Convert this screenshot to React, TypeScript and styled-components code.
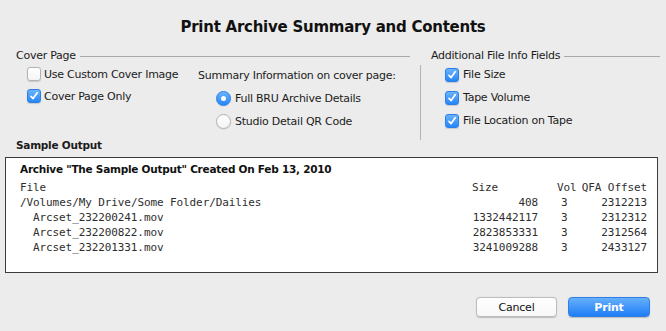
import styled, { createGlobalStyle } from 'styled-components';

const GlobalStyle = createGlobalStyle`
  body {
    margin: 0;
    background: #ececec;
    font-family: "DejaVu Sans", "Open Sans", sans-serif;
    font-size: 11px;
    letter-spacing: -0.25px;
    color: #1b1b1b;
  }
`;

const Dialog = styled.div`
  width: 666px;
  height: 331px;
  box-sizing: border-box;
  display: flex;
  flex-direction: column;
  background: #ececec;
`;

const Title = styled.h1`
  margin: 0;
  padding-top: 17px;
  height: 20px;
  line-height: 20px;
  text-align: center;
  font-size: 15px;
  font-weight: bold;
  letter-spacing: -0.25px;
  color: #111;
`;

const Top = styled.div`
  display: flex;
  height: 89px;
  margin-top: 12px;
  padding-left: 16px;
`;

const Group = styled.div<{ $width: number }>`
  width: ${(p) => p.$width}px;
  display: flex;
  flex-direction: column;
`;

const GroupHeader = styled.div`
  display: flex;
  align-items: center;
  gap: 4px;
  height: 14px;
  line-height: 14px;
  white-space: nowrap;

  &::after {
    content: '';
    flex: 1;
    height: 1px;
    background: #a9a9a9;
  }
`;

const Divider = styled.div`
  width: 1px;
  height: 75px;
  margin: 16px 10px 0 10px;
  background: #b4b4b4;
`;

const Columns = styled.div`
  display: flex;
`;

const CheckColumn = styled.div<{ $indent: number; $width?: number }>`
  box-sizing: border-box;
  display: flex;
  flex-direction: column;
  padding-left: ${(p) => p.$indent}px;
  width: ${(p) => (p.$width ? `${p.$width}px` : 'auto')};
  flex-shrink: 0;
`;

const Row = styled.label<{ $height: number; $gap: number }>`
  display: flex;
  align-items: center;
  gap: ${(p) => p.$gap}px;
  height: ${(p) => p.$height}px;
  white-space: nowrap;
`;

const Box = styled.span<{ $on?: boolean }>`
  width: 14px;
  height: 14px;
  box-sizing: border-box;
  border-radius: 3px;
  display: flex;
  align-items: center;
  justify-content: center;
  border: 1px solid ${(p) => (p.$on ? '#2a7fe8' : '#b3b3b3')};
  background: ${(p) =>
    p.$on ? 'linear-gradient(#6cb3fd, #2586f6)' : 'linear-gradient(#ffffff, #f4f4f4)'};
  box-shadow: 0 0.5px 1px rgba(0, 0, 0, 0.15);
`;

const Radio = styled.span<{ $on?: boolean }>`
  width: 15px;
  height: 15px;
  box-sizing: border-box;
  border-radius: 50%;
  display: flex;
  align-items: center;
  justify-content: center;
  border: 1px solid ${(p) => (p.$on ? '#2a7fe8' : '#b3b3b3')};
  background: ${(p) =>
    p.$on ? 'linear-gradient(#6cb3fd, #2586f6)' : 'linear-gradient(#ffffff, #f4f4f4)'};
  box-shadow: 0 0.5px 1px rgba(0, 0, 0, 0.15);

  &::after {
    content: '';
    display: ${(p) => (p.$on ? 'block' : 'none')};
    width: 5px;
    height: 5px;
    border-radius: 50%;
    background: #fff;
  }
`;

const SummaryColumn = styled.div`
  display: flex;
  flex-direction: column;
  padding-top: 2px;
  white-space: nowrap;
`;

const SummaryLabel = styled.div`
  height: 22px;
  line-height: 22px;
`;

const RadioList = styled.div`
  display: flex;
  flex-direction: column;
  padding-left: 18px;
`;

const SectionLabel = styled.div`
  height: 14px;
  line-height: 14px;
  padding-left: 16px;
  font-size: 10.5px;
  font-weight: bold;
`;

const OutputBox = styled.div`
  margin: 5px 0 0 5px;
  width: 653px;
  height: 116px;
  box-sizing: border-box;
  border: 1px solid #3c3c3c;
  background: #fff;
  padding: 5px 0 0 14px;
`;

const OutputTitle = styled.div`
  height: 12px;
  line-height: 12px;
  font-size: 10.5px;
  font-weight: bold;
  color: #111;
`;

const Table = styled.div`
  margin-top: 5px;
  display: grid;
  grid-template-columns: 452px 66px 43px 66px;
  grid-auto-rows: 15px;
  font-family: "DejaVu Sans Mono", "Liberation Mono", monospace;
  font-size: 11px;
  letter-spacing: -0.1px;
  line-height: 15px;
  color: #2e2e2e;
`;

const Cell = styled.div<{ $align?: 'left' | 'right'; $pad?: number }>`
  text-align: ${(p) => p.$align ?? 'left'};
  padding-left: ${(p) => p.$pad ?? 0}px;
  white-space: pre;
`;

const Footer = styled.div`
  display: flex;
  justify-content: flex-end;
  gap: 11px;
  margin-top: 24px;
  padding-right: 16px;
`;

const Button = styled.button<{ $primary?: boolean }>`
  width: ${(p) => (p.$primary ? 82 : 81)}px;
  height: 20px;
  border-radius: 4px;
  font-family: "DejaVu Sans", sans-serif;
  font-size: 11px;
  letter-spacing: -0.2px;
  font-weight: ${(p) => (p.$primary ? 'bold' : 'normal')};
  color: ${(p) => (p.$primary ? '#fff' : '#111')};
  border: 1px solid ${(p) => (p.$primary ? '#2f7fe6' : '#bdbdbd')};
  background: ${(p) =>
    p.$primary ? 'linear-gradient(#66b0fd, #1f7df5)' : 'linear-gradient(#ffffff, #f7f7f7)'};
  box-shadow: 0 0.5px 1px rgba(0, 0, 0, 0.2);
  padding: 0;
`;

const Check = () => (
  <svg width="10" height="10" viewBox="0 0 10 10">
    <path d="M2 5.4 L4.1 7.6 L8.2 1.8" fill="none" stroke="#fff" strokeWidth="1.7" strokeLinecap="round" strokeLinejoin="round" />
  </svg>
);

const CheckBox = ({ on }: { on?: boolean }) => <Box $on={on}>{on && <Check />}</Box>;

const rows = [
  { file: '/Volumes/My Drive/Some Folder/Dailies', size: '408', vol: '3', offset: '2312213', indent: 0 },
  { file: 'Arcset_232200241.mov', size: '1332442117', vol: '3', offset: '2312312', indent: 13 },
  { file: 'Arcset_232200822.mov', size: '2823853331', vol: '3', offset: '2312564', indent: 13 },
  { file: 'Arcset_232201331.mov', size: '3241009288', vol: '3', offset: '2433127', indent: 13 },
];

const App = () => {
  return (
    <>
      <GlobalStyle />
      <Dialog>
        <Title>Print Archive Summary and Contents</Title>
        <Top>
          <Group $width={394}>
            <GroupHeader>Cover Page</GroupHeader>
            <Columns>
              <CheckColumn $indent={11} $width={182}>
                <Row $height={22} $gap={3}>
                  <CheckBox />
                  Use Custom Cover Image
                </Row>
                <Row $height={22} $gap={3}>
                  <CheckBox on />
                  Cover Page Only
                </Row>
              </CheckColumn>
              <SummaryColumn>
                <SummaryLabel>Summary Information on cover page:</SummaryLabel>
                <RadioList>
                  <Row $height={23} $gap={4}>
                    <Radio $on />
                    Full BRU Archive Details
                  </Row>
                  <Row $height={23} $gap={4}>
                    <Radio />
                    Studio Detail QR Code
                  </Row>
                </RadioList>
              </SummaryColumn>
            </Columns>
          </Group>
          <Divider />
          <Group $width={229}>
            <GroupHeader>Additional File Info Fields</GroupHeader>
            <CheckColumn $indent={14}>
              <Row $height={23} $gap={4}>
                <CheckBox on />
                File Size
              </Row>
              <Row $height={23} $gap={4}>
                <CheckBox on />
                Tape Volume
              </Row>
              <Row $height={23} $gap={4}>
                <CheckBox on />
                File Location on Tape
              </Row>
            </CheckColumn>
          </Group>
        </Top>
        <SectionLabel>Sample Output</SectionLabel>
        <OutputBox>
          <OutputTitle>Archive "The Sample Output" Created On Feb 13, 2010</OutputTitle>
          <Table>
            <Cell>File</Cell>
            <Cell>Size</Cell>
            <Cell $pad={19}>Vol</Cell>
            <Cell $align="right">QFA Offset</Cell>
            {rows.map((r) => (
              <>
                <Cell $pad={r.indent}>{r.file}</Cell>
                <Cell $align="right">{r.size}</Cell>
                <Cell $pad={23}>{r.vol}</Cell>
                <Cell $align="right">{r.offset}</Cell>
              </>
            ))}
          </Table>
        </OutputBox>
        <Footer>
          <Button>Cancel</Button>
          <Button $primary>Print</Button>
        </Footer>
      </Dialog>
    </>
  );
};

export default App;
